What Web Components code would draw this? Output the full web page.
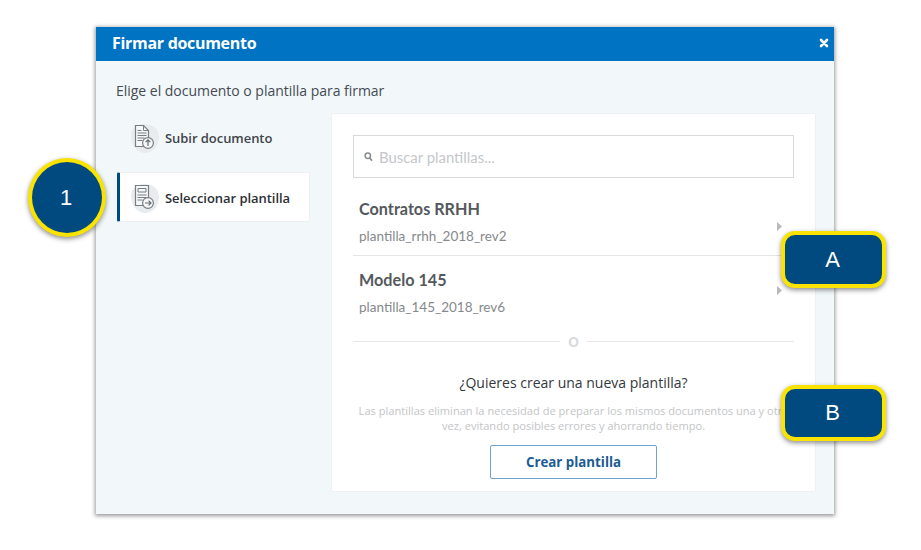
<!DOCTYPE html>
<html lang="es">
<head>
<meta charset="utf-8">
<title>Firmar documento</title>
<style>
  html, body { margin: 0; height: 100%; background: #fff; }
  body { width: 921px; height: 550px; overflow: hidden; position: relative; font-family: "Open Sans", sans-serif; }
</style>
</head>
<body>
<sign-dialog title-text="Firmar documento">
  <tab-item slot="tabs" kind="upload">Subir documento</tab-item>
  <tab-item slot="tabs" kind="select" active>Seleccionar plantilla</tab-item>
  <template-panel>
    <template-row name="Contratos RRHH" file="plantilla_rrhh_2018_rev2"></template-row>
    <template-row name="Modelo 145" file="plantilla_145_2018_rev6"></template-row>
  </template-panel>
</sign-dialog>
<call-out shape="circle" style="left:28px;top:158px;width:78px;height:79px;padding-right:2px">1</call-out>
<call-out style="left:781px;top:231px;width:105px;height:57px;padding-right:2px">A</call-out>
<call-out style="left:781px;top:385px;width:105px;height:56px;padding-right:2px">B</call-out>

<script>
class SignDialog extends HTMLElement {
  constructor() {
    super();
    this.attachShadow({ mode: "open" });
  }

  connectedCallback() {
    this.shadowRoot.innerHTML = `
      <style>
        :host {
          display: flex;
          flex-direction: column;
          width: 738px;
          height: 487px;
          margin: 27px 0 0 96px;
          background: #f2f7fa;
          box-shadow: 0 1px 4px 1px rgba(0, 0, 0, 0.4);
          font-family: "Open Sans", sans-serif;
        }
        header {
          box-sizing: border-box;
          height: 34px;
          flex: none;
          display: flex;
          align-items: center;
          justify-content: space-between;
          padding: 0 5px 2px 16px;
          background: #0074c2;
          color: #fff;
          font-size: 16px;
          font-weight: 700;
          letter-spacing: -0.3px;
        }
        header svg { display: block; }
        .lead {
          margin: 20px 0 0 20px;
          height: 20px;
          line-height: 20px;
          font-size: 14px;
          letter-spacing: -0.02px;
          color: #444b52;
        }
        .main {
          flex: 1;
          min-height: 0;
          display: flex;
          margin-top: 12px;
          padding: 0 18px 22px 21px;
        }
        .tabs { width: 193px; flex: none; }
        .content { margin-left: 21px; flex: 1; min-width: 0; }
      </style>
      <header>
        <span>${this.getAttribute("title-text")}</span>
        <svg width="10" height="10" viewBox="0 0 10 10"><path d="M2 2l6 6M8 2l-6 6" stroke="#fff" stroke-width="2.6" stroke-linecap="round"/></svg>
      </header>
      <div class="lead">Elige el documento o plantilla para firmar</div>
      <div class="main">
        <div class="tabs"><slot name="tabs"></slot></div>
        <div class="content"><slot></slot></div>
      </div>
    `;
  }
}

class TabItem extends HTMLElement {
  constructor() {
    super();
    this.attachShadow({ mode: "open" });
  }

  connectedCallback() {
    const upload = this.getAttribute("kind") === "upload";
    const arrow = upload
      ? '<path d="M18 25v-6M15.6 21.2L18 18.8l2.4 2.4" fill="none" stroke="#666c71" stroke-width="1.2"/>'
      : '<path d="M15 22h6M18.6 19.6L21 22l-2.4 2.4" fill="none" stroke="#666c71" stroke-width="1.2"/>';
    const lines = upload
      ? '<path d="M7.5 9.5h4M7.5 12h9M7.5 14.5h9M7.5 17h7M7.5 19.5h5" stroke="#777d82" stroke-width="1"/>'
      : '<path d="M8 7.5h8v3.5H8z" fill="none" stroke="#777d82"/><path d="M7.5 14h9M7.5 16.5h9M7.5 19h5" stroke="#777d82" stroke-width="1"/>';
    const sheet = upload
      ? '<path d="M5.5 4.5h8l5 5v16h-13z" fill="#f6f7f8" stroke="#777d82" stroke-width="1.2"/><path d="M13.5 4.5v5h5" fill="none" stroke="#777d82"/>'
      : '<path d="M5.5 4.5h13v20h-13z" fill="#f6f7f8" stroke="#777d82" stroke-width="1.2"/>';
    this.shadowRoot.innerHTML = `
      <style>
        :host {
          display: flex;
          align-items: center;
          box-sizing: border-box;
          width: 193px;
          height: 50px;
          margin-bottom: 9px;
          padding-left: 13px;
          color: #3f454b;
          font-size: 13px;
          font-weight: 600;
          letter-spacing: -0.05px;
        }
        :host([active]) {
          background: #fff;
          border: 1px solid #edf0f2;
          border-left: 3px solid #00497f;
          border-radius: 2px;
          padding-left: 10px;
          padding-top: 2px;
          color: #2b3035;
        }
        svg { flex: none; margin-right: 3px; display: block; }
      </style>
      <svg width="32" height="34" viewBox="0 0 32 34">
        <path d="M1 15C1 8 6 3 14 3c9 0 15 5 15 13 0 9-6 16-14 16C7 32 1 24 1 15z" fill="#e9ecef"/>
        ${sheet}
        ${lines}
        <circle cx="18" cy="22" r="5.4" fill="#f6f7f8" stroke="#777d82" stroke-width="1.2"/>
        ${arrow}
      </svg>
      <slot></slot>
    `;
  }
}

class TemplatePanel extends HTMLElement {
  constructor() {
    super();
    this.attachShadow({ mode: "open" });
  }

  connectedCallback() {
    this.shadowRoot.innerHTML = `
      <style>
        :host {
          display: flex;
          flex-direction: column;
          box-sizing: border-box;
          height: 379px;
          padding: 21px 21px 0 21px;
          background: #fff;
          border: 1px solid #edf1f4;
          border-radius: 2px;
          font-family: "Open Sans", sans-serif;
        }
        .search {
          display: flex;
          align-items: center;
          box-sizing: border-box;
          height: 43px;
          flex: none;
          padding-left: 10px;
          border: 1px solid #d8d9da;
          color: #c4c7ca;
          font-family: Lato, sans-serif;
          font-size: 14.9px;
        }
        .search svg { margin-right: 6px; display: block; }
        .or {
          display: flex;
          align-items: center;
          gap: 8px;
          height: 14px;
          margin-top: 9px;
          color: #dadbdc;
          font-size: 14px;
          font-weight: 700;
          flex: none;
        }
        .or i { flex: 1; height: 1px; background: #e8e8e8; }
        h3 {
          margin: 25px 0 0;
          text-align: center;
          font-size: 14px;
          line-height: 20px;
          font-weight: 400;
          color: #33383d;
        }
        p {
          margin: 10px 0 0;
          text-align: center;
          font-size: 11.1px;
          line-height: 15px;
          color: #c3c5c7;
          white-space: nowrap;
          height: 30px;
        }
        button {
          display: block;
          box-sizing: border-box;
          width: 167px;
          height: 34px;
          margin: 12px auto 0;
          padding: 0;
          background: #fff;
          border: 1px solid #6ea3cb;
          border-radius: 2px;
          color: #1b5c92;
          font: 700 13.3px "Open Sans", sans-serif;
        }
      </style>
      <div class="search">
        <svg width="9" height="10" viewBox="0 0 9 10"><circle cx="3.8" cy="3.8" r="2.7" fill="none" stroke="#8a8d90" stroke-width="1.5"/><path d="M5.6 5.8L8 8.8" stroke="#8a8d90" stroke-width="1.8"/></svg>
        <span>Buscar plantillas...</span>
      </div>
      <slot></slot>
      <div class="or"><i></i><span>O</span><i></i></div>
      <h3>¿Quieres crear una nueva plantilla?</h3>
      <p>Las plantillas eliminan la necesidad de preparar los mismos documentos una y otra<br>vez, evitando posibles errores y ahorrando tiempo.</p>
      <button>Crear plantilla</button>
    `;
  }
}

class TemplateRow extends HTMLElement {
  constructor() {
    super();
    this.attachShadow({ mode: "open" });
  }

  connectedCallback() {
    this.shadowRoot.innerHTML = `
      <style>
        :host {
          display: flex;
          align-items: flex-start;
          justify-content: space-between;
          box-sizing: border-box;
          height: 69px;
          padding: 14px 12px 0 6px;
          font-family: Lato, sans-serif;
        }
        :host(:first-of-type) {
          height: 78px;
          padding-top: 21px;
          border-bottom: 1px solid #e4e5e6;
        }
        .name { font-size: 16.2px; line-height: 20px; font-weight: 700; color: #55595d; }
        .file { margin-top: 7px; font-size: 13.5px; line-height: 20px; color: #85898c; }
        svg { display: block; margin-top: 16px; }
        :host(:first-of-type) svg { margin-top: 23px; }
      </style>
      <div>
        <div class="name">${this.getAttribute("name")}</div>
        <div class="file">${this.getAttribute("file")}</div>
      </div>
      <svg width="5" height="9" viewBox="0 0 5 9"><path d="M0 0l5 4.5L0 9z" fill="#b6babd"/></svg>
    `;
  }
}

class CallOut extends HTMLElement {
  constructor() {
    super();
    this.attachShadow({ mode: "open" });
  }

  connectedCallback() {
    const radius = this.getAttribute("shape") === "circle" ? "50%" : "14px";
    this.shadowRoot.innerHTML = `
      <style>
        :host {
          position: absolute;
          display: flex;
          align-items: center;
          justify-content: center;
          box-sizing: border-box;
          background: #004a80;
          border: 4px solid #fae300;
          border-radius: ${radius};
          box-shadow: 0 2px 5px rgba(0, 0, 0, 0.45);
          color: #fff;
          font-family: "Liberation Sans", sans-serif;
          font-size: 22px;
        }
      </style>
      <slot></slot>
    `;
  }
}

customElements.define("sign-dialog", SignDialog);
customElements.define("tab-item", TabItem);
customElements.define("template-panel", TemplatePanel);
customElements.define("template-row", TemplateRow);
customElements.define("call-out", CallOut);
</script>
</body>
</html>
